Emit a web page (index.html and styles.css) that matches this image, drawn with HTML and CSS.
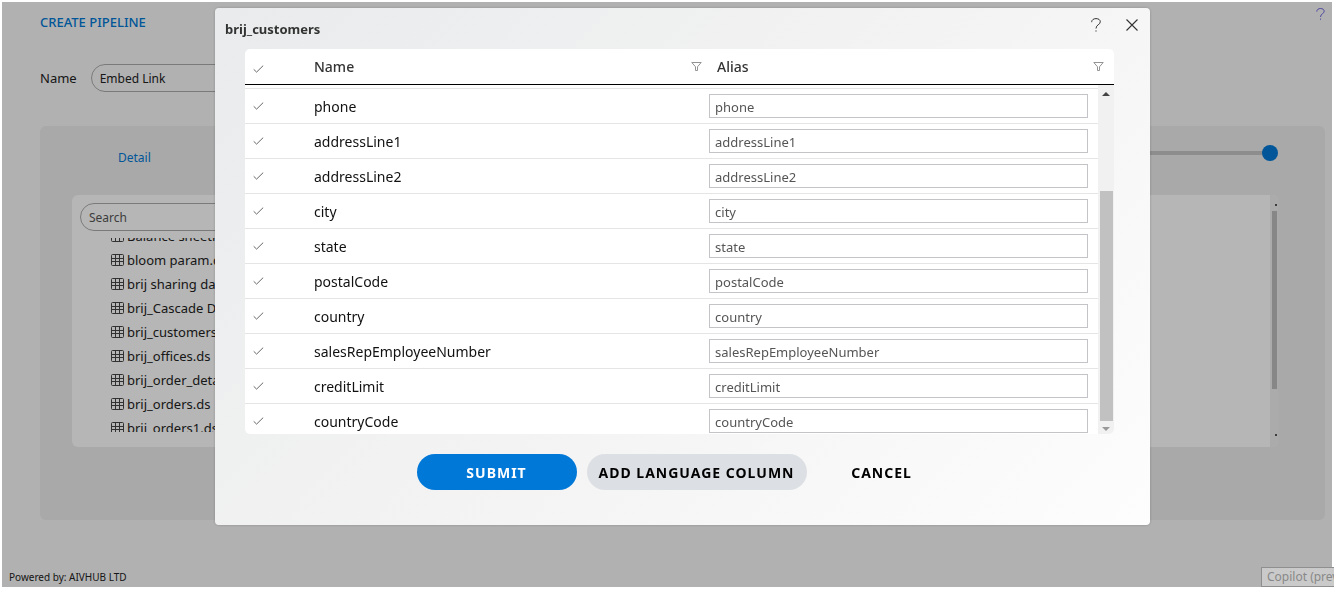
FILE: index.html
```html
<!DOCTYPE html>
<html lang="en">

<head>
    <meta charset="UTF-8">
    <meta name="viewport" content="width=device-width, initial-scale=1.0">
    <title>Create Pipeline</title>
    <link rel="stylesheet" href="styles.css">
</head>

<body>
    <!-- Shared icons -->
    <svg class="sprite" aria-hidden="true">
        <symbol id="icon-check" viewBox="0 0 11 8">
            <path d="M.7 4.3 3.6 7.1 10.2.6" fill="none" stroke="currentColor" />
        </symbol>
        <symbol id="icon-filter" viewBox="0 0 11 9">
            <path d="M.8.5h9.4L6.5 4.8v3.7h-2V4.8z" fill="none" stroke="currentColor" stroke-width=".9" />
        </symbol>
        <symbol id="icon-table" viewBox="0 0 13 12">
            <path d="M1.5.5h10a1 1 0 0 1 1 1v9a1 1 0 0 1-1 1h-10a1 1 0 0 1-1-1v-9a1 1 0 0 1 1-1zM.5 4.5h12M.5 7.5h12M4.5.5v11M8.5.5v11" fill="none" stroke="currentColor" />
        </symbol>
        <symbol id="icon-help" viewBox="0 0 10 14">
            <path d="M.7 4.2V3.6C.9 1.8 2.7.6 5 .6c2.5 0 4.3 1.2 4.3 3.2C9.3 6.8 5 6.6 5 10.5" fill="none" stroke="currentColor" />
            <path d="M4.4 12.4h1.2v1.2H4.400z" fill="currentColor" />
        </symbol>
        <symbol id="icon-close" viewBox="0 0 12 12">
            <path d="m.5.5 11 11M11.5.5l-11 11" fill="none" stroke="currentColor" stroke-width="1.1" />
        </symbol>
    </svg>

    <div class="app">
        <header class="page-header">
            <h1>CREATE PIPELINE</h1>
            <a href="#" class="page-help" aria-label="Help"><svg><use href="#icon-help" /></svg></a>
        </header>

        <div class="name-row">
            <label for="pipeline-name">Name</label>
            <input type="text" id="pipeline-name" class="pill-input" value="Embed Link">
        </div>

        <main class="panel">
            <div class="stepper">
                <a href="#">Detail</a>
                <div class="track"><span class="dot"></span></div>
            </div>
            <section class="card">
                <input type="text" class="pill-input" placeholder="Search" aria-label="Search">
                <ul class="tree">
                    <li><svg><use href="#icon-table" /></svg>Balance sheetk.ds</li>
                    <li><svg><use href="#icon-table" /></svg>bloom param.ds</li>
                    <li><svg><use href="#icon-table" /></svg>brij sharing data.ds</li>
                    <li><svg><use href="#icon-table" /></svg>brij_Cascade DS.ds</li>
                    <li><svg><use href="#icon-table" /></svg>brij_customers.ds</li>
                    <li><svg><use href="#icon-table" /></svg>brij_offices.ds</li>
                    <li><svg><use href="#icon-table" /></svg>brij_order_details.ds</li>
                    <li><svg><use href="#icon-table" /></svg>brij_orders.ds</li>
                    <li><svg><use href="#icon-table" /></svg>brij_orders1.ds</li>
                </ul>
                <div class="card-scroll">
                    <span class="tick"></span>
                    <span class="thumb"></span>
                    <span class="tick"></span>
                </div>
            </section>
        </main>

        <footer>Powered by: AIVHUB LTD</footer>
    </div>

    <div class="overlay">
        <div class="modal" role="dialog" aria-labelledby="modal-title">
            <div class="modal-header">
                <h2 id="modal-title">brij_customers</h2>
                <button type="button" class="icon-btn help" aria-label="Help"><svg><use href="#icon-help" /></svg></button>
                <button type="button" class="icon-btn" aria-label="Close"><svg><use href="#icon-close" /></svg></button>
            </div>

            <div class="grid">
                <table>
                    <thead>
                        <tr>
                            <th class="col-check"><svg class="check"><use href="#icon-check" /></svg></th>
                            <th class="col-name"><div class="head">Name <svg class="filter"><use href="#icon-filter" /></svg></div></th>
                            <th class="col-alias"><div class="head">Alias <svg class="filter"><use href="#icon-filter" /></svg></div></th>
                        </tr>
                    </thead>
                    <tbody>
                        <tr>
                            <td><svg class="check"><use href="#icon-check" /></svg></td>
                            <td>phone</td>
                            <td class="alias"><input type="text" value="phone" aria-label="Alias for phone"></td>
                        </tr>
                        <tr>
                            <td><svg class="check"><use href="#icon-check" /></svg></td>
                            <td>addressLine1</td>
                            <td class="alias"><input type="text" value="addressLine1" aria-label="Alias for addressLine1"></td>
                        </tr>
                        <tr>
                            <td><svg class="check"><use href="#icon-check" /></svg></td>
                            <td>addressLine2</td>
                            <td class="alias"><input type="text" value="addressLine2" aria-label="Alias for addressLine2"></td>
                        </tr>
                        <tr>
                            <td><svg class="check"><use href="#icon-check" /></svg></td>
                            <td>city</td>
                            <td class="alias"><input type="text" value="city" aria-label="Alias for city"></td>
                        </tr>
                        <tr>
                            <td><svg class="check"><use href="#icon-check" /></svg></td>
                            <td>state</td>
                            <td class="alias"><input type="text" value="state" aria-label="Alias for state"></td>
                        </tr>
                        <tr>
                            <td><svg class="check"><use href="#icon-check" /></svg></td>
                            <td>postalCode</td>
                            <td class="alias"><input type="text" value="postalCode" aria-label="Alias for postalCode"></td>
                        </tr>
                        <tr>
                            <td><svg class="check"><use href="#icon-check" /></svg></td>
                            <td>country</td>
                            <td class="alias"><input type="text" value="country" aria-label="Alias for country"></td>
                        </tr>
                        <tr>
                            <td><svg class="check"><use href="#icon-check" /></svg></td>
                            <td>salesRepEmployeeNumber</td>
                            <td class="alias"><input type="text" value="salesRepEmployeeNumber" aria-label="Alias for salesRepEmployeeNumber"></td>
                        </tr>
                        <tr>
                            <td><svg class="check"><use href="#icon-check" /></svg></td>
                            <td>creditLimit</td>
                            <td class="alias"><input type="text" value="creditLimit" aria-label="Alias for creditLimit"></td>
                        </tr>
                        <tr>
                            <td><svg class="check"><use href="#icon-check" /></svg></td>
                            <td>countryCode</td>
                            <td class="alias"><input type="text" value="countryCode" aria-label="Alias for countryCode"></td>
                        </tr>
                    </tbody>
                </table>
                <div class="scrollbar">
                    <span class="arrow up"></span>
                    <span class="thumb"></span>
                    <span class="arrow down"></span>
                </div>
            </div>

            <div class="actions">
                <button type="button" class="btn submit">SUBMIT</button>
                <button type="button" class="btn add">ADD LANGUAGE COLUMN</button>
                <button type="button" class="btn cancel">CANCEL</button>
            </div>
        </div>
    </div>

    <div class="copilot">Copilot (preview)</div>
</body>

</html>
```
FILE: styles.css
```css
* {
    margin: 0;
    padding: 0;
    box-sizing: border-box;
}

html {
    background: #fff;
}

body {
    margin: 2px;
    font-family: "Noto Sans", "Open Sans", sans-serif;
    font-size: 12px;
    color: #222;
    overflow: hidden;
}

svg {
    display: block;
    flex: none;
}

input,
button {
    font: inherit;
}

a {
    color: #0078d4;
    text-decoration: none;
}

.sprite {
    position: absolute;
    width: 0;
    height: 0;
}

/* Page */
.app {
    display: flex;
    flex-direction: column;
    min-height: calc(100vh - 4px);
    background: #f5f5f5;
}

.page-header {
    display: flex;
    justify-content: space-between;
    padding: 6px 7px 0 38px;
}

.page-header h1 {
    padding-top: 4px;
    font-size: 13px;
    line-height: 20px;
    font-weight: 500;
    color: #0078d4;
}

.page-help {
    color: #5a50d8;
}

.page-help svg {
    width: 9px;
    height: 12px;
}

.name-row {
    display: flex;
    align-items: center;
    gap: 14px;
    padding: 32px 0 34px 38px;
    font-size: 13px;
}

.pill-input {
    width: 280px;
    height: 28px;
    padding: 0 8px;
    border: 1px solid #aaa;
    border-radius: 14px;
    background: transparent;
    color: #222;
    font-size: 12px;
    outline: none;
}

.pill-input::placeholder {
    color: #555;
}

.panel {
    margin: 0 7px 0 38px;
    padding: 19px 47px 73px 32px;
    border-radius: 6px;
    background: #eaeaea;
}

.stepper {
    display: flex;
    align-items: flex-start;
    height: 50px;
    padding-left: 46px;
    line-height: 26px;
}

.track {
    position: relative;
    flex: 1;
    height: 4px;
    margin: 6px 8px 0 80px;
    background: #c4c4c4;
}

.dot {
    position: absolute;
    top: -6px;
    right: -8px;
    width: 16px;
    height: 16px;
    border-radius: 50%;
    background: #0078d4;
}

.card {
    position: relative;
    padding: 8px 8px 15px;
    border-radius: 6px;
    background: #fcfcfc;
    overflow: hidden;
}

.tree {
    height: 194px;
    margin-top: 7px;
    padding-left: 31px;
    list-style: none;
    font-size: 13px;
    overflow: hidden;
}

.tree li {
    display: flex;
    align-items: center;
    gap: 3px;
    height: 24px;
    white-space: nowrap;
}

.tree li:first-child {
    margin-top: -14px;
}

.tree svg {
    width: 13px;
    height: 12px;
    color: #444;
}

.card-scroll {
    position: absolute;
    top: 0;
    right: 0;
    bottom: 0;
    display: flex;
    flex-direction: column;
    align-items: flex-end;
    width: 8px;
    padding: 9px 1px 11px;
    background: #eee;
}

.card-scroll .thumb {
    width: 5px;
    height: 178px;
    margin: 5px 0 auto;
    background: #bcbcbc;
}

.tick {
    width: 2px;
    height: 2px;
    background: #555;
}

footer {
    margin-top: auto;
    padding: 0 7px 3px;
    font-size: 10px;
    line-height: 14px;
}

.copilot {
    position: fixed;
    left: calc(100% - 73px);
    bottom: 2px;
    height: 20px;
    padding: 0 5px;
    border: 1px solid #8f8f8f;
    background: #cacaca;
    color: #888;
    line-height: 18px;
    white-space: nowrap;
}

/* Modal */
.overlay {
    position: fixed;
    inset: 2px;
    padding: 6px 182px 0 213px;
    background: rgba(0, 0, 0, 0.28);
}

.modal {
    padding: 0 36px 35px 30px;
    border-radius: 4px;
    background: linear-gradient(135deg, #e9ebec 0%, #f3f3f3 50%, #fefdfd 100%);
    box-shadow: 0 0 3px rgba(0, 0, 0, 0.2);
}

.modal-header {
    display: flex;
    align-items: center;
    gap: 12px;
    height: 41px;
    margin: 0 -30px 0 -20px;
}

.modal-header h2 {
    flex: 1;
    font-size: 13px;
    font-weight: 700;
    color: #333;
}

.icon-btn {
    display: flex;
    align-items: center;
    justify-content: center;
    width: 24px;
    height: 24px;
    margin-bottom: 8px;
    border: none;
    background: none;
    color: #333;
    cursor: pointer;
}

.icon-btn svg {
    width: 12px;
    height: 12px;
}

.icon-btn.help svg {
    width: 10px;
    height: 14px;
}

.grid {
    position: relative;
    height: 385px;
    border-radius: 5px;
    background: #fff;
    overflow: hidden;
}

table {
    width: 100%;
    table-layout: fixed;
    border-spacing: 0;
    font-size: 14px;
    color: #111;
}

.col-check {
    width: 69px;
}

.col-name {
    width: 45%;
}

th {
    height: 36px;
    border-bottom: 1px solid #000;
    font-weight: 500;
    text-align: left;
    color: #333;
}

.head {
    display: flex;
    align-items: center;
    justify-content: space-between;
    padding-right: 3px;
}

.col-alias .head {
    padding: 0 10px 0 12px;
}

/* sliver of the row scrolled away above */
tbody::before {
    content: "";
    display: block;
    height: 3px;
}

td {
    height: 35px;
    border-top: 1px solid #e5e5e5;
}

.check {
    width: 11px;
    height: 8px;
    margin-left: 8px;
    color: #666;
}

th .check {
    margin-top: 4px;
}

.filter {
    width: 11px;
    height: 9px;
    color: #888;
}

.alias {
    padding: 0 26px 0 4px;
}

.alias input {
    display: block;
    width: 100%;
    height: 24px;
    padding: 1px 5px 0;
    border: 1px solid #c4c4c8;
    background: #fff;
    color: #555;
    font-size: 13px;
}

.scrollbar {
    position: absolute;
    top: 36px;
    right: 0;
    bottom: 0;
    display: flex;
    flex-direction: column;
    justify-content: space-between;
    align-items: center;
    width: 16px;
    padding: 7px 0 3px;
    background: #f1f1f1;
}

.scrollbar .thumb {
    width: 13px;
    height: 230px;
    margin: auto 0 6px;
    background: #c1c1c1;
}

.arrow {
    border: 4px solid transparent;
}

.arrow.up {
    border-top: none;
    border-bottom-color: #444;
}

.arrow.down {
    border-bottom: none;
    border-top-color: #999;
}

.actions {
    display: flex;
    justify-content: center;
    gap: 10px;
    margin: 20px -28px 0 -24px;
}

.btn {
    height: 36px;
    border: none;
    border-radius: 18px;
    font-size: 14px;
    font-weight: 700;
    letter-spacing: 1px;
    white-space: nowrap;
    cursor: pointer;
}

.submit {
    width: 160px;
    background: #0078d7;
    color: #fff;
}

.add {
    width: 220px;
    background: #dcdfe3;
    color: #000;
}

.cancel {
    width: 130px;
    background: none;
    color: #000;
}
```
